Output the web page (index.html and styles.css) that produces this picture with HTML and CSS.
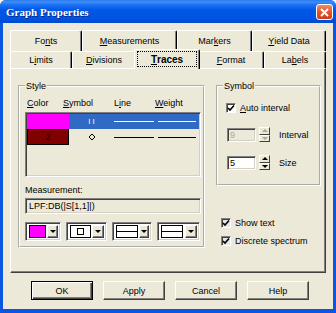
FILE: index.html
```html
<!DOCTYPE html>
<html lang="en">
<head>
    <meta charset="UTF-8">
    <title>Graph Properties</title>
    <link rel="stylesheet" href="styles.css">
</head>
<body>
    <div class="window">
        <div class="titlebar">
            <span class="title">Graph Properties</span>
            <div class="close">
                <svg width="9" height="9" viewBox="0 0 9 9"><path d="M1 1 L8 8 M8 1 L1 8" stroke="#fff" stroke-width="2"/></svg>
            </div>
        </div>

        <div class="client">
            <div class="tabs">
                <div class="tab-row back">
                    <div class="tab w72">Fo<u>n</u>ts</div>
                    <div class="tab w95"><u>M</u>easurements</div>
                    <div class="tab w75">Mar<u>k</u>ers</div>
                    <div class="tab w74"><u>Y</u>ield Data</div>
                </div>
                <div class="tab-row front">
                    <div class="tab w62">L<u>i</u>mits</div>
                    <div class="tab w64"><u>D</u>ivisions</div>
                    <div class="tab w62 active"><span class="focus"><u>T</u>races</span></div>
                    <div class="tab w66"><u>F</u>ormat</div>
                    <div class="tab w62">La<u>b</u>els</div>
                </div>
            </div>

            <div class="panel">
                <fieldset class="group style-group">
                    <legend>Style</legend>
                    <div class="col-heads">
                        <span><u>C</u>olor</span>
                        <span><u>S</u>ymbol</span>
                        <span>L<u>i</u>ne</span>
                        <span><u>W</u>eight</span>
                    </div>
                    <div class="list">
                        <div class="row selected">
                            <div class="cell-color magenta"></div>
                            <div class="cell-symbol">I I</div>
                            <div class="cell-line"><i></i></div>
                            <div class="cell-weight"><i></i></div>
                        </div>
                        <div class="row">
                            <div class="cell-color maroon">2</div>
                            <div class="cell-symbol">
                                <svg width="8" height="8" viewBox="0 0 8 8"><path d="M4 1 L7 4 L4 7 L1 4 Z" fill="none" stroke="#000"/></svg>
                            </div>
                            <div class="cell-line"><i></i></div>
                            <div class="cell-weight"><i></i></div>
                        </div>
                    </div>
                    <div class="meas-label">Measurement:</div>
                    <div class="textbox meas">LPF:DB(|S[1,1]|)</div>
                    <div class="combos">
                        <div class="combo w36">
                            <div class="field"><span class="swatch"></span></div>
                            <div class="drop"><i class="arrow"></i></div>
                        </div>
                        <div class="combo w41">
                            <div class="field"><span class="frame"><span class="dot"></span></span></div>
                            <div class="drop"><i class="arrow"></i></div>
                        </div>
                        <div class="combo w40">
                            <div class="field"><span class="frame line"></span></div>
                            <div class="drop"><i class="arrow"></i></div>
                        </div>
                        <div class="combo w43">
                            <div class="field"><span class="frame line"></span></div>
                            <div class="drop"><i class="arrow"></i></div>
                        </div>
                    </div>
                </fieldset>

                <div class="right-col">
                    <fieldset class="group symbol-group">
                        <legend>Symbol</legend>
                        <div class="check-row auto">
                            <span class="check white">
                                <svg width="8" height="8" viewBox="0 0 8 8"><path d="M1 4 L3 6 L7 1.5" fill="none" stroke="#000" stroke-width="1.6"/></svg>
                            </span>
                            <span><u>A</u>uto interval</span>
                        </div>
                        <div class="spin-row">
                            <div class="textbox small disabled">9</div>
                            <div class="spin disabled"><span><i class="up"></i></span><span><i class="down"></i></span></div>
                            <span class="spin-label">Interval</span>
                        </div>
                        <div class="spin-row">
                            <div class="textbox small white">5</div>
                            <div class="spin"><span><i class="up"></i></span><span><i class="down"></i></span></div>
                            <span class="spin-label">Size</span>
                        </div>
                    </fieldset>

                    <div class="checks">
                        <div class="check-row">
                            <span class="check">
                                <svg width="8" height="8" viewBox="0 0 8 8"><path d="M1 4 L3 6 L7 1.5" fill="none" stroke="#000" stroke-width="1.6"/></svg>
                            </span>
                            <span>Show text</span>
                        </div>
                        <div class="check-row">
                            <span class="check">
                                <svg width="8" height="8" viewBox="0 0 8 8"><path d="M1 4 L3 6 L7 1.5" fill="none" stroke="#000" stroke-width="1.6"/></svg>
                            </span>
                            <span>Discrete spectrum</span>
                        </div>
                    </div>
                </div>
            </div>

            <div class="buttons">
                <button class="default">OK</button>
                <button>Apply</button>
                <button>Cancel</button>
                <button>Help</button>
            </div>
        </div>
    </div>
</body>
</html>
```

FILE: styles.css
```css
body {
    margin: 0;
    background: #fff;
    font-family: "Liberation Sans", Arial, sans-serif;
    font-size: 9px;
    color: #000;
}

.window {
    width: 336px;
    height: 313px;
    display: flex;
    flex-direction: column;
    background: #0a55e2;
    border-radius: 6px 6px 0 0;
    overflow: hidden;
}

.titlebar {
    height: 23px;
    flex: none;
    display: flex;
    align-items: center;
    padding: 0 3px 0 6px;
    background: linear-gradient(to bottom, #2a78f0 0, #3d8ff7 2px, #1a6ff3 5px, #0058e6 10px, #0053e0 19px, #0048d2 23px);
}

.title {
    flex: 1;
    color: #fff;
    font-family: "Liberation Serif", "Times New Roman", serif;
    font-weight: bold;
    font-size: 11px;
    text-shadow: 1px 1px #0a2a8a;
}

.close {
    width: 17px;
    height: 16px;
    box-sizing: border-box;
    margin-top: 1px;
    border: 1px solid #fff;
    border-radius: 3px;
    background: linear-gradient(to bottom, #f08a68, #e0552e 50%, #c8401c);
    display: flex;
    align-items: center;
    justify-content: center;
}

.client {
    flex: 1;
    margin: 0 3px 4px 3px;
    background: #ece9d8;
    padding: 7px 7px 0 7px;
    display: flex;
    flex-direction: column;
}

/* tabs */
.tab-row {
    display: flex;
}

.tab {
    box-sizing: border-box;
    display: flex;
    align-items: center;
    justify-content: center;
    border-top: 1px solid #fff;
    border-left: 1px solid #fff;
    border-right: 1px solid #000;
    box-shadow: inset -1px 0 #808080;
    border-radius: 2px 2px 0 0;
    background: #ece9d8;
}

.back .tab { height: 21px; }
.front .tab { height: 17px; }

.tab.active {
    position: relative;
    z-index: 1;
    height: 20px;
    margin: -2px -2px -2px -2px;
    padding: 1px 2px 2px 2px;
    font-size: 10px;
    font-weight: bold;
}

.focus {
    flex: 1;
    align-self: stretch;
    display: flex;
    align-items: center;
    justify-content: center;
    border: 1px dotted #000;
}

.w62 { width: 62px; }
.w64 { width: 64px; }
.w66 { width: 66px; }
.w72 { width: 72px; }
.w74 { width: 74px; }
.w75 { width: 75px; }
.w95 { width: 95px; }
.tab.active.w62 { width: 66px; }

/* panel */
.panel {
    height: 205px;
    box-sizing: border-box;
    border: 1px solid;
    border-color: #fff #404040 #404040 #fff;
    box-shadow: inset -1px -1px #808080;
    display: flex;
    gap: 11px;
    padding: 11px 4px 0 7px;
}

.group {
    margin: 0;
    border: 2px groove #fff;
    padding: 0 2px 5px 5px;
    box-sizing: border-box;
    min-width: 0;
}

.group legend {
    padding: 0 1px;
    line-height: 12px;
}

.style-group {
    width: 187px;
    height: 168px;
}

.col-heads {
    display: grid;
    grid-template-columns: 36px 51px 41px auto;
    padding-left: 2px;
    margin-top: 5px;
    line-height: 12px;
}

.list {
    margin-top: 3px;
    height: 65px;
    box-sizing: border-box;
    border: 1px solid;
    border-color: #808080 #fff #fff #808080;
    box-shadow: inset 1px 1px #404040, inset -1px -1px #d4d0c8;
    padding: 1px;
}

.row {
    display: grid;
    grid-template-columns: 42px 45px 42px auto;
    height: 15px;
}

.row + .row { height: 16px; }

.row.selected {
    background: #316ac5;
    color: #fff;
}

.cell-color {
    display: flex;
    align-items: center;
    justify-content: center;
    box-sizing: border-box;
}

.magenta { background: #ff00ff; }

.maroon {
    background: #800000;
    border: 1px solid #000;
    color: #000;
}

.cell-symbol {
    display: flex;
    align-items: center;
    justify-content: center;
    font-size: 8px;
}

.cell-line, .cell-weight {
    display: flex;
    align-items: center;
}

.cell-line i, .cell-weight i {
    display: block;
    height: 1px;
    background: #000;
}

.cell-line i { width: 40px; }
.cell-weight i { width: 38px; margin-left: 2px; }

.selected .cell-line i, .selected .cell-weight i { background: #fff; }

.meas-label {
    margin-top: 7px;
    line-height: 12px;
}

.textbox {
    box-sizing: border-box;
    border: 1px solid;
    border-color: #808080 #fff #fff #808080;
    box-shadow: inset 1px 1px #404040, inset -1px -1px #d4d0c8;
    display: flex;
    align-items: center;
    padding-left: 3px;
}

.meas {
    margin-top: 2px;
    height: 16px;
}

.combos {
    margin-top: 8px;
    display: flex;
    gap: 5px;
}

.combo {
    height: 19px;
    box-sizing: border-box;
    border: 1px solid;
    border-color: #808080 #fff #fff #808080;
    box-shadow: inset 1px 1px #404040, inset -1px -1px #d4d0c8;
    padding: 2px 2px 2px 2px;
    background: #fff;
    display: flex;
    gap: 1px;
}

.w36 { width: 36px; }
.w40 { width: 40px; }
.w41 { width: 41px; }
.w43 { width: 43px; }

.field {
    flex: 1;
    display: flex;
    align-items: center;
    padding-left: 1px;
}

.swatch {
    width: 17px;
    height: 13px;
    box-sizing: border-box;
    background: #ff00ff;
    border: 1px solid #000;
}

.frame {
    width: 21px;
    height: 13px;
    box-sizing: border-box;
    border: 1px solid #000;
    display: flex;
    align-items: center;
    justify-content: center;
}

.dot {
    width: 7px;
    height: 7px;
    box-sizing: border-box;
    border: 1px solid #000;
}

.frame.line {
    width: 22px;
    background: linear-gradient(#000, #000) center / 100% 1px no-repeat;
}

.drop {
    width: 12px;
    box-sizing: border-box;
    background: #ece9d8;
    border: 1px solid;
    border-color: #fff #404040 #404040 #fff;
    box-shadow: inset -1px -1px #808080;
    display: flex;
    align-items: center;
    justify-content: center;
}

.arrow {
    width: 0;
    height: 0;
    border-left: 3px solid transparent;
    border-right: 3px solid transparent;
    border-top: 3px solid #000;
}

/* right column */
.right-col {
    width: 105px;
    display: flex;
    flex-direction: column;
}

.symbol-group {
    height: 106px;
}

.check-row {
    display: flex;
    align-items: center;
    gap: 4px;
    line-height: 12px;
}

.check {
    width: 10px;
    height: 10px;
    box-sizing: border-box;
    border: 1px solid;
    border-color: #808080 #fff #fff #808080;
    box-shadow: inset 1px 1px #404040;
    background: #e6e6e6;
    display: flex;
    align-items: center;
    justify-content: center;
}

.check.white { background: #fff; }

.auto {
    margin: 10px 0 0 3px;
}

.spin-row {
    display: flex;
    align-items: center;
    height: 15px;
    margin: 13px 0 0 4px;
}

.textbox.small {
    width: 29px;
    height: 14px;
    padding-left: 2px;
}

.textbox.disabled {
    color: #aca899;
}

.textbox.white {
    background: #fff;
}

.spin {
    width: 11px;
    height: 15px;
    margin: 0 9px 0 3px;
    display: flex;
    flex-direction: column;
}

.spin span {
    flex: 1;
    box-sizing: border-box;
    border: 1px solid;
    border-color: #fff #404040 #404040 #fff;
    display: flex;
    align-items: center;
    justify-content: center;
}

.spin .up {
    border-left: 3px solid transparent;
    border-right: 3px solid transparent;
    border-bottom: 3px solid #000;
}

.spin .down {
    border-left: 3px solid transparent;
    border-right: 3px solid transparent;
    border-top: 3px solid #000;
}

.spin.disabled .up { border-bottom-color: #aca899; }
.spin.disabled .down { border-top-color: #aca899; }

.checks {
    margin: 31px 0 0 5px;
    display: flex;
    flex-direction: column;
    gap: 6px;
}

/* buttons */
.buttons {
    margin-top: 8px;
    padding-left: 21px;
    display: flex;
    gap: 10px;
}

button {
    width: 62px;
    height: 19px;
    box-sizing: border-box;
    font-family: "Liberation Sans", Arial, sans-serif;
    font-size: 9px;
    color: #000;
    background: #ece9d8;
    border: 1px solid;
    border-color: #fff #404040 #404040 #fff;
    box-shadow: inset -1px -1px #808080;
    padding: 0;
}

button.default {
    border-color: #000;
    box-shadow: inset 1px 1px #fff, inset -1px -1px #404040, inset -2px -2px #808080;
}
```
